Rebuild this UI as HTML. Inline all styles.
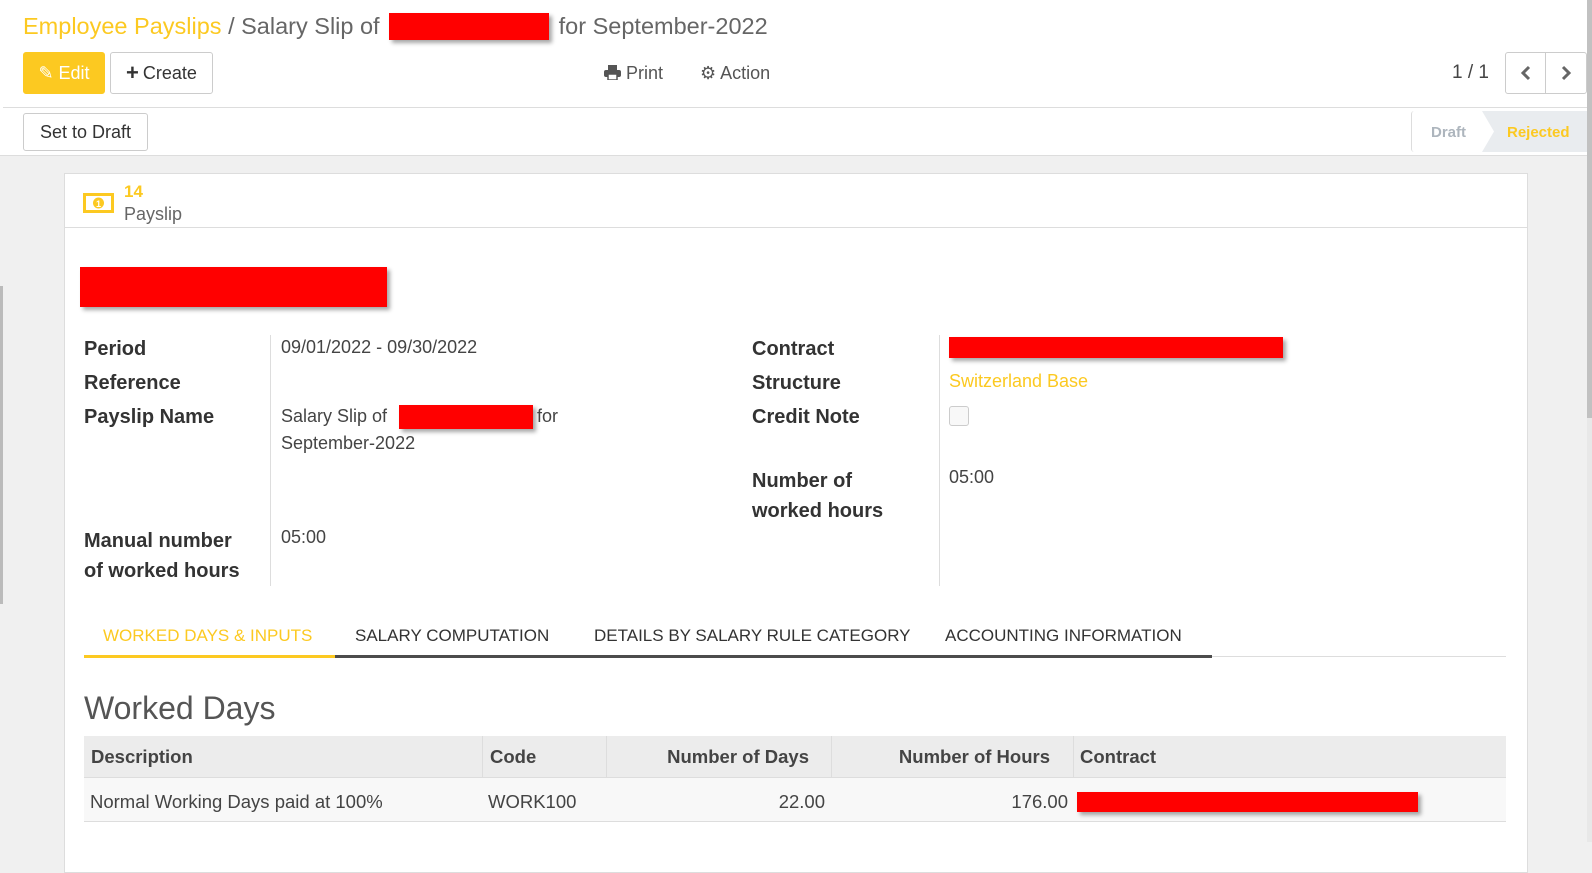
<!DOCTYPE html>
<html><head><meta charset="utf-8"><style>
*{box-sizing:border-box;margin:0;padding:0}
body{width:1592px;height:842px;overflow:hidden;background:#f0f0f0;font-family:"Liberation Sans",sans-serif;color:#4c4c4c;position:relative}
.a{position:absolute;white-space:nowrap}
.red{position:absolute;background:#f00;box-shadow:3px 3px 4px rgba(0,0,0,.35)}
.btn{position:absolute;border:1px solid #ccc;border-radius:3px;background:#fff;font-size:18px;color:#333;display:flex;align-items:center;justify-content:center}
.lbl{position:absolute;font-weight:bold;font-size:20px;color:#333;line-height:30px}
.val{position:absolute;font-size:18px;color:#444;line-height:27px}
</style></head><body>
<div class="a" style="left:0;top:0;width:1587px;height:156px;background:#fff;border-bottom:1px solid #ddd"></div>
<div class="a" style="left:3px;top:107px;width:1584px;height:1px;background:#ddd"></div>
<div class="a" style="left:23px;top:11px;font-size:23.5px;line-height:30px;color:#fcc921">Employee Payslips <span style="color:#666">/ Salary Slip of <span style="display:inline-block;width:160px;height:27px;background:#f00;vertical-align:-6px;box-shadow:3px 3px 4px rgba(0,0,0,.35);margin:0 3px"></span> for September-2022</span></div>
<div class="btn" style="left:23px;top:52px;width:82px;height:42px;background:#fcc921;border-color:#fcc921;color:#fff">✎ Edit</div>
<div class="btn" style="left:110px;top:52px;width:103px;height:42px"><b style="font-size:22px;margin-right:4px">+</b>Create</div>
<div class="a" style="left:604px;top:61px;font-size:18px;line-height:24px;color:#555">
<svg width="17" height="15" viewBox="0 0 17 15" style="vertical-align:-1px"><rect x="4" y="0" width="9" height="5" fill="#555"/><rect x="0" y="5" width="17" height="7" rx="2" fill="#555"/><rect x="4" y="9" width="9" height="6" fill="#fff" stroke="#555" stroke-width="1.5"/></svg> Print</div>
<div class="a" style="left:700px;top:61px;font-size:18px;line-height:24px;color:#555"><span style="font-size:18px">⚙</span> Action</div>
<div class="a" style="left:1452px;top:61px;font-size:19px;line-height:24px;color:#444">1 / 1</div>
<div class="btn" style="left:1505px;top:52px;width:41px;height:42px;border-radius:3px 0 0 3px"><svg width="12" height="16"><path d="M9 2L3 8l6 6" stroke="#666" stroke-width="3" fill="none"/></svg></div>
<div class="btn" style="left:1545px;top:52px;width:42px;height:42px;border-radius:0 3px 3px 0"><svg width="12" height="16"><path d="M3 2l6 6-6 6" stroke="#666" stroke-width="3" fill="none"/></svg></div>
<div class="btn" style="left:23px;top:113px;width:125px;height:38px">Set to Draft</div>
<div class="a" style="left:1411px;top:111px;width:176px;height:41px;border-left:1px solid #ddd;border-radius:3px"></div>
<div class="a" style="left:1482px;top:111px;width:105px;height:41px;background:#e9ecef;clip-path:polygon(0 0,100% 0,100% 100%,0 100%,12px 50%)"></div>
<div class="a" style="left:1431px;top:124px;font-size:15px;font-weight:bold;color:#adb5bd">Draft</div>
<div class="a" style="left:1507px;top:124px;font-size:15px;font-weight:bold;color:#fcc921">Rejected</div>
<div class="a" style="left:1587px;top:0;width:5px;height:842px;background:#e8e8e8"></div>
<div class="a" style="left:1587px;top:0;width:5px;height:418px;background:#c1c1c1"></div>
<div class="a" style="left:0;top:286px;width:3px;height:318px;background:#bbb"></div>
<div class="a" style="left:64px;top:173px;width:1464px;height:700px;background:#fff;border:1px solid #ddd"></div>
<div class="a" style="left:65px;top:227px;width:1462px;height:1px;background:#ddd"></div>
<svg class="a" style="left:83px;top:193px" width="31" height="20"><rect x="1.5" y="1.5" width="28" height="17" fill="none" stroke="#fcc921" stroke-width="3"/><circle cx="15.5" cy="10" r="5.5" fill="#fcc921"/><text x="15.5" y="14" font-size="9" font-weight="bold" text-anchor="middle" fill="#fff" font-family="Liberation Sans">1</text></svg>
<div class="a" style="left:124px;top:181px;font-size:17px;font-weight:bold;color:#fcc921;line-height:22px">14</div>
<div class="a" style="left:124px;top:203px;font-size:18px;color:#666;line-height:22px">Payslip</div>
<div class="red" style="left:80px;top:267px;width:307px;height:40px"></div>
<div class="a" style="left:270px;top:335px;width:1px;height:251px;background:#ddd"></div>
<div class="a" style="left:939px;top:335px;width:1px;height:251px;background:#ddd"></div>
<div class="lbl" style="left:84px;top:334px">Period</div>
<div class="lbl" style="left:84px;top:368px">Reference</div>
<div class="lbl" style="left:84px;top:402px">Payslip Name</div>
<div class="lbl" style="left:84px;top:526px">Manual number<br>of worked hours</div>
<div class="val" style="left:281px;top:334px">09/01/2022 - 09/30/2022</div>
<div class="val" style="left:281px;top:403px">Salary Slip of</div>
<div class="red" style="left:399px;top:405px;width:134px;height:24px"></div>
<div class="val" style="left:537px;top:403px">for</div>
<div class="val" style="left:281px;top:430px">September-2022</div>
<div class="val" style="left:281px;top:524px">05:00</div>
<div class="lbl" style="left:752px;top:334px">Contract</div>
<div class="lbl" style="left:752px;top:368px">Structure</div>
<div class="lbl" style="left:752px;top:402px">Credit Note</div>
<div class="lbl" style="left:752px;top:466px">Number of<br>worked hours</div>
<div class="red" style="left:949px;top:337px;width:334px;height:21px"></div>
<div class="val" style="left:949px;top:368px;color:#fcc921">Switzerland Base</div>
<div class="a" style="left:949px;top:406px;width:20px;height:20px;border:1px solid #ccc;border-radius:3px;background:#f8f8f8"></div>
<div class="val" style="left:949px;top:464px">05:00</div>
<div class="a" style="left:84px;top:656px;width:1422px;height:1px;background:#ddd"></div>
<div class="a" style="left:335px;top:655px;width:877px;height:3px;background:#4c4c4c"></div>
<div class="a" style="left:84px;top:655px;width:251px;height:3px;background:#fcc921"></div>
<div class="a" style="left:103px;top:626px;font-size:17px;color:#fcc921">WORKED DAYS &amp; INPUTS</div>
<div class="a" style="left:355px;top:626px;font-size:17px;color:#333">SALARY COMPUTATION</div>
<div class="a" style="left:594px;top:626px;font-size:17px;color:#333">DETAILS BY SALARY RULE CATEGORY</div>
<div class="a" style="left:945px;top:626px;font-size:17px;color:#333">ACCOUNTING INFORMATION</div>
<div class="a" style="left:84px;top:690px;font-size:32px;color:#555">Worked Days</div>
<div class="a" style="left:84px;top:736px;width:1422px;height:42px;background:#ececec;border-bottom:1px solid #ddd"></div>
<div class="a" style="left:84px;top:778px;width:1422px;height:44px;background:#f8f8f8;border-bottom:1px solid #ddd"></div>
<div class="a" style="left:482px;top:736px;width:1px;height:42px;background:#ddd"></div>
<div class="a" style="left:606px;top:736px;width:1px;height:42px;background:#ddd"></div>
<div class="a" style="left:831px;top:736px;width:1px;height:42px;background:#ddd"></div>
<div class="a" style="left:1073px;top:736px;width:1px;height:42px;background:#ddd"></div>
<div class="a" style="left:91px;top:746px;font-size:18.5px;font-weight:bold;color:#444">Description</div>
<div class="a" style="left:490px;top:746px;font-size:18.5px;font-weight:bold;color:#444">Code</div>
<div class="a" style="left:606px;width:203px;text-align:right;top:746px;font-size:18.5px;font-weight:bold;color:#444">Number of Days</div>
<div class="a" style="left:831px;width:219px;text-align:right;top:746px;font-size:18.5px;font-weight:bold;color:#444">Number of Hours</div>
<div class="a" style="left:1080px;top:746px;font-size:18.5px;font-weight:bold;color:#444">Contract</div>
<div class="a" style="left:90px;top:791px;font-size:18.5px;color:#444">Normal Working Days paid at 100%</div>
<div class="a" style="left:488px;top:791px;font-size:18.5px;color:#444">WORK100</div>
<div class="a" style="left:606px;width:219px;text-align:right;top:791px;font-size:18.5px;color:#444">22.00</div>
<div class="a" style="left:831px;width:237px;text-align:right;top:791px;font-size:18.5px;color:#444">176.00</div>
<div class="red" style="left:1077px;top:792px;width:341px;height:20px"></div>
</body></html>
